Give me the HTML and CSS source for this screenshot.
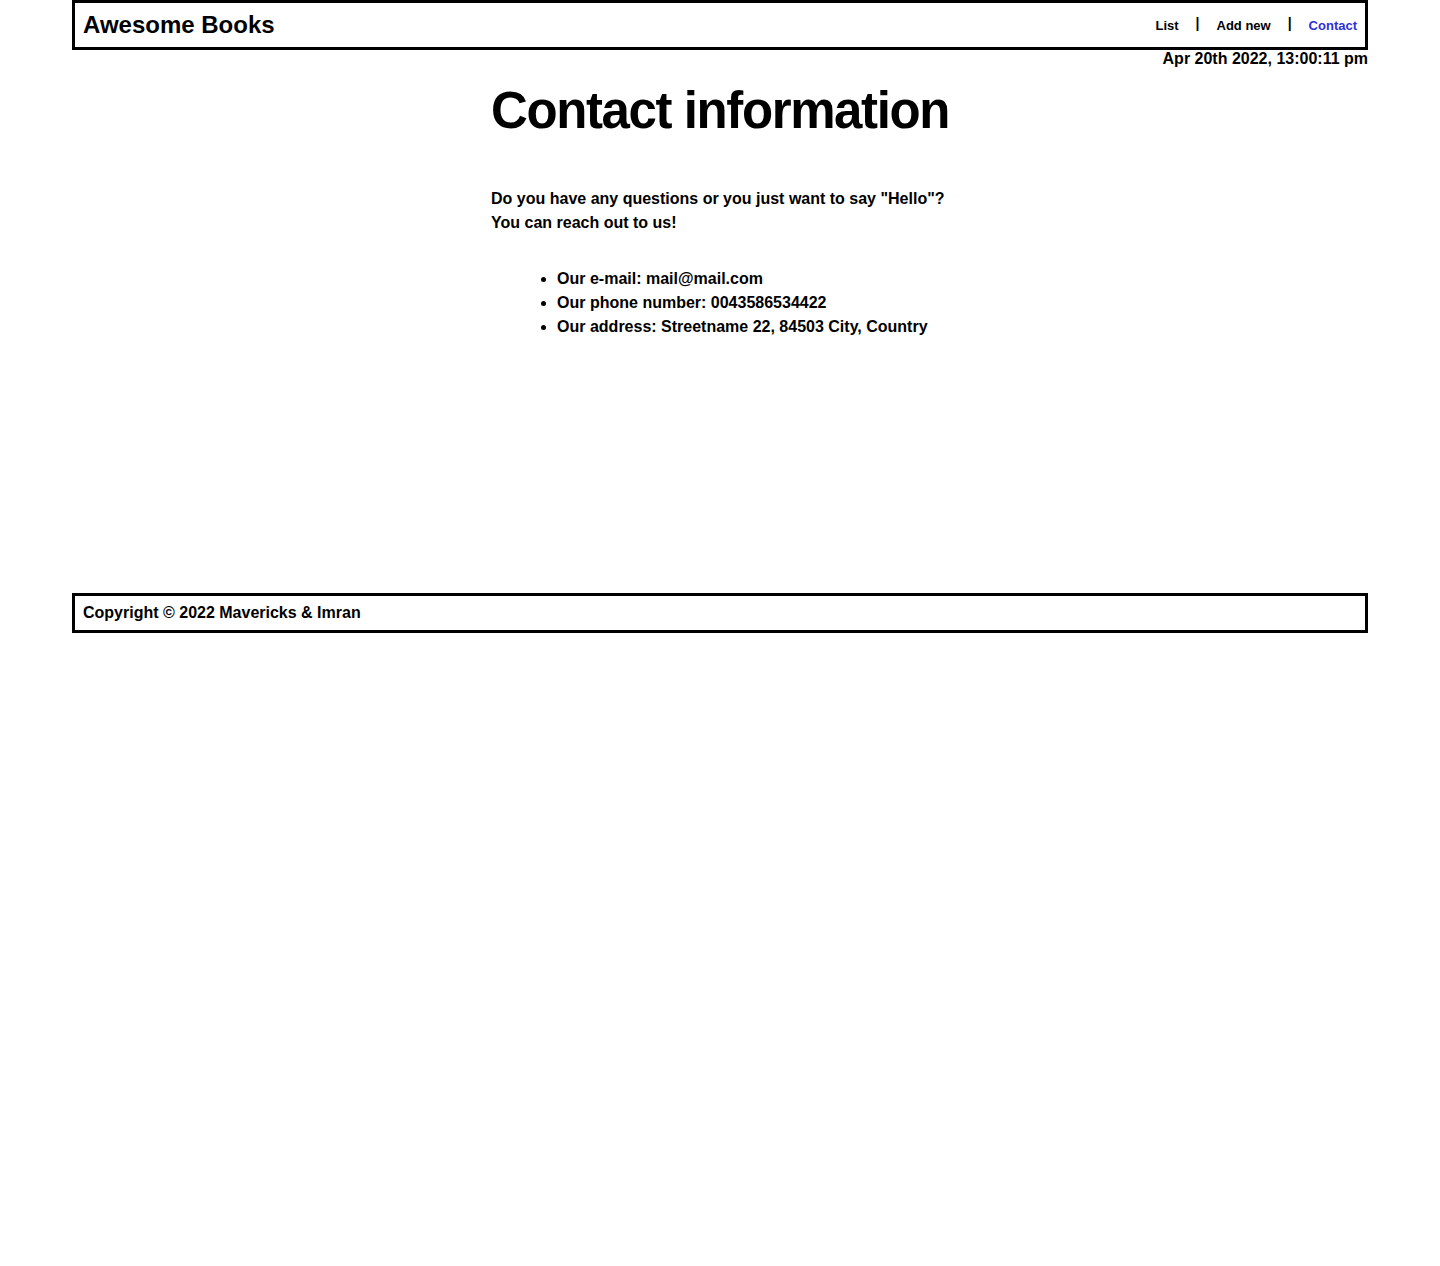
FILE: index.html
```html
<!DOCTYPE html>
<html lang="en">
<head>
    <meta charset="UTF-8">
    <meta name="viewport" content="width=device-width, initial-scale=1.0">
    <title>Awesome Books</title>
    <link rel="stylesheet" href="styles.css">
</head>
<body>
    <div class="container">
        <header class="navbar">
            <h2 class="logo">Awesome Books</h2>
            <nav class="nav-links">
                <a href="#list">List</a>
                <span class="sep">|</span>
                <a href="#add">Add new</a>
                <span class="sep">|</span>
                <a href="#contact" class="active">Contact</a>
            </nav>
        </header>
        <p class="date">Apr 20th 2022, 13:00:11 pm</p>

        <main class="main">
            <section class="contact" id="contact">
                <h1>Contact information</h1>
                <p>Do you have any questions or you just want to say "Hello"?<br>You can reach out to us!</p>
                <ul>
                    <li>Our e-mail: mail@mail.com</li>
                    <li>Our phone number: 0043586534422</li>
                    <li>Our address: Streetname 22, 84503 City, Country</li>
                </ul>
            </section>
        </main>

        <footer class="footer">
            <p>Copyright © 2022 Mavericks &amp; Imran</p>
        </footer>
    </div>
</body>
</html>
```

FILE: styles.css
```css
body {
    margin: 0;
    font-family: 'Liberation Sans', Arial, sans-serif;
    font-weight: bold;
    color: black;
    background: white;
}
.container {
    width: 90%;
    margin: 0 auto;
}
.navbar {
    display: flex;
    justify-content: space-between;
    align-items: center;
    height: 44px;
    border: 3px solid black;
    padding: 0 8px;
}
.logo {
    margin: 0;
    font-size: 24px;
}
.nav-links {
    display: flex;
    align-items: center;
    gap: 17px;
    font-size: 13px;
}
.nav-links a {
    color: black;
    text-decoration: none;
}
.nav-links a.active {
    color: #2f2fd6;
}
.sep {
    font-size: 14px;
    font-weight: 900;
    position: relative;
    top: -2px;
}
.date {
    margin: 0;
    text-align: right;
    font-size: 16px;
    line-height: 18px;
}
.main {
    min-height: 515px;
}
.contact {
    width: fit-content;
    margin: 0 auto;
}
.contact h1 {
    font-size: 51px;
    letter-spacing: -1.4px;
    margin: 10px 0 43px;
    line-height: 66px;
}
.contact p {
    margin: 0;
    font-size: 16px;
    line-height: 24px;
}
.contact ul {
    margin: 32px 0 0;
    padding-left: 66px;
    font-size: 16px;
    line-height: 24px;
}
.footer {
    border: 3px solid black;
    padding: 0 8px;
}
.footer p {
    margin: 0;
    font-size: 16px;
    line-height: 34px;
}
```
